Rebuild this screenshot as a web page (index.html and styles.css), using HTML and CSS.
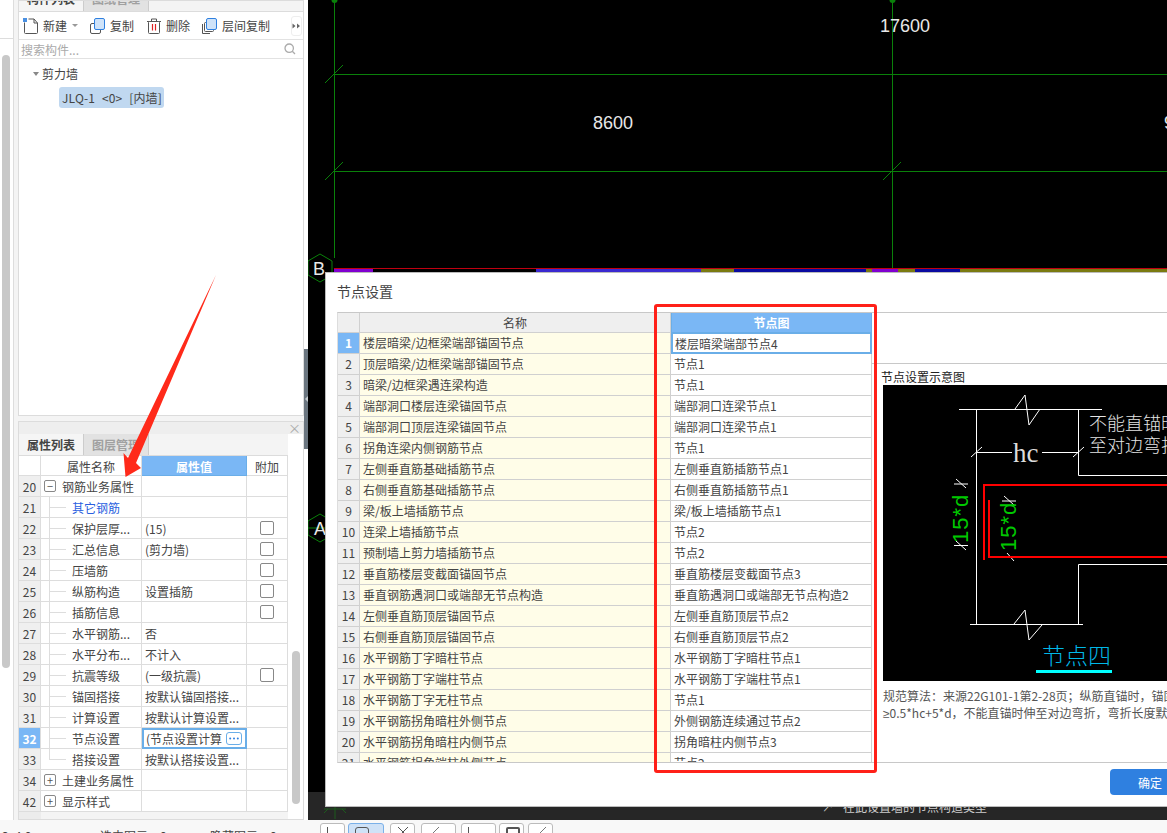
FILE: index.html
```html
<!DOCTYPE html>
<html lang="zh">
<head>
<meta charset="utf-8">
<title>节点设置</title>
<link rel="stylesheet" href="styles.css">
</head>
<body>
<div class="app">
  <div class="main">
    <aside class="sidebar">
      <div class="rail"><div class="rail-head"></div><div class="rail-thumb"></div></div>
      <div class="panels">
        <section class="panel panel-top">
          <div class="tabs tabs-clipped"><span class="tab tab-on">构件列表</span><span class="tab">图纸管理</span></div>
          <div class="toolbar">
            <svg class="ico ico-first" width="15" height="16" viewBox="0 0 15 16"><path d="M1.5 4.5V14.5a1 1 0 0 0 1 1h11a1 1 0 0 0 1-1V5L11 1H5.5" fill="none" stroke="#555"/><path d="M11 1v4h3.5" fill="none" stroke="#555"/><rect x="0" y="0" width="4" height="4" fill="#4a90e2"/></svg>
            <span class="lbl">新建</span><span class="caret"></span>
            <svg class="ico ico-copy" width="15" height="16" viewBox="0 0 15 16"><rect x="0.5" y="5.5" width="10" height="10" rx="1.5" fill="#fff" stroke="#555"/><rect x="4.5" y="0.5" width="10" height="11" rx="1.5" fill="#cfe3f9" stroke="#2f80e0"/></svg>
            <span class="lbl">复制</span>
            <svg class="ico ico-del" width="14" height="16" viewBox="0 0 14 16"><path d="M0 3.5h14M4.5 3V1h5v2" fill="none" stroke="#555"/><rect x="1.5" y="3.5" width="11" height="12" rx="1" fill="#fff" stroke="#555"/><path d="M5.5 6v6.5M8.5 6v6.5" stroke="#d22" stroke-width="1.2"/></svg>
            <span class="lbl">删除</span>
            <svg class="ico ico-layer" width="15" height="16" viewBox="0 0 15 16"><path d="M0.5 6v9.5H8" fill="none" stroke="#555"/><rect x="2.5" y="4.5" width="9" height="9" rx="1" fill="#fff" stroke="#555"/><rect x="4.5" y="0.5" width="10" height="11" rx="1.5" fill="#cfe3f9" stroke="#2f80e0"/></svg>
            <span class="lbl">层间复制</span>
            <span class="more"><svg width="9" height="6" viewBox="0 0 9 6"><path d="M0.5 0.5L3.5 3L0.5 5.5ZM5 0.5L8 3L5 5.5Z" fill="#666"/></svg></span>
          </div>
          <div class="search"><span>搜索构件...</span>
            <svg width="12" height="12" viewBox="0 0 12 12"><circle cx="5.2" cy="5.2" r="4.2" fill="none" stroke="#aaa" stroke-width="1.3"/><path d="M8.3 8.3L11 11" stroke="#aaa" stroke-width="1.3"/></svg>
          </div>
          <div class="tree">
            <div class="tree-root"><span class="tree-caret"></span>剪力墙</div>
            <div class="tree-chip">JLQ-1 &lt;0&gt; [内墙]</div>
          </div>
        </section>
        <section class="panel panel-props">
          <div class="props-head"><span class="close">×</span></div>
          <div class="tabs"><span class="tab tab-on">属性列表</span><span class="tab">图层管理</span></div>
          <div class="props-body">
            <div class="props-col">
              <div class="pgrid">
                <div class="c hd"></div><div class="c hd">属性名称</div><div class="c hd hd-on">属性值</div><div class="c hd">附加</div>

                <div class="c rh">20</div><div class="c nm grp"><span class="box">−</span>钢筋业务属性</div><div class="c"></div><div class="c"></div>
                <div class="c rh">21</div><div class="c nm kid link">其它钢筋</div><div class="c"></div><div class="c"></div>
                <div class="c rh">22</div><div class="c nm kid">保护层厚...</div><div class="c val">(15)</div><div class="c ck"><span class="cb"></span></div>
                <div class="c rh">23</div><div class="c nm kid">汇总信息</div><div class="c val">(剪力墙)</div><div class="c ck"><span class="cb"></span></div>
                <div class="c rh">24</div><div class="c nm kid">压墙筋</div><div class="c"></div><div class="c ck"><span class="cb"></span></div>
                <div class="c rh">25</div><div class="c nm kid">纵筋构造</div><div class="c val">设置插筋</div><div class="c ck"><span class="cb"></span></div>
                <div class="c rh">26</div><div class="c nm kid">插筋信息</div><div class="c"></div><div class="c ck"><span class="cb"></span></div>
                <div class="c rh">27</div><div class="c nm kid">水平钢筋...</div><div class="c val">否</div><div class="c"></div>
                <div class="c rh">28</div><div class="c nm kid">水平分布...</div><div class="c val">不计入</div><div class="c"></div>
                <div class="c rh">29</div><div class="c nm kid">抗震等级</div><div class="c val">(一级抗震)</div><div class="c ck"><span class="cb"></span></div>
                <div class="c rh">30</div><div class="c nm kid">锚固搭接</div><div class="c val">按默认锚固搭接...</div><div class="c"></div>
                <div class="c rh">31</div><div class="c nm kid">计算设置</div><div class="c val">按默认计算设置...</div><div class="c"></div>
                <div class="c rh rh-on">32</div><div class="c nm kid">节点设置</div><div class="c val editor"><span class="edit-text">(节点设置计算</span><span class="dots"><svg width="10" height="3" viewBox="0 0 10 3"><circle cx="1.2" cy="1.5" r="1" fill="#2f80e0"/><circle cx="5" cy="1.5" r="1" fill="#2f80e0"/><circle cx="8.8" cy="1.5" r="1" fill="#2f80e0"/></svg></span></div><div class="c"></div>
                <div class="c rh">33</div><div class="c nm kid kid-last">搭接设置</div><div class="c val">按默认搭接设置...</div><div class="c"></div>
                <div class="c rh">34</div><div class="c nm grp"><span class="box">+</span>土建业务属性</div><div class="c"></div><div class="c"></div>
                <div class="c rh">42</div><div class="c nm grp"><span class="box">+</span>显示样式</div><div class="c"></div><div class="c"></div>
              </div>
              <div class="props-foot"><span></span></div>
            </div>
            <div class="props-thumb"></div>
          </div>
        </section>
      </div>
      <div class="splitter"><div class="split-handle"><span></span></div></div>
    </aside>

    <div class="cad">
      <svg class="cad-view" width="859" height="792" viewBox="308 0 859 792">
        <g stroke="#0a800a" fill="none">
          <path d="M334.5 0V258M892.5 0V268M334 74.5H1167M334 171.5H1167"/>
          <path d="M325 83L343 65M325 180L343 162M883 180L901 162"/>
        </g>
        <circle cx="334.5" cy="0" r="3" fill="#0a800a"/>
        <circle cx="892.5" cy="0" r="3" fill="#0a800a"/>
        <g fill="#e8e8e8" class="cad-num">
          <text x="880" y="32">17600</text>
          <text x="593" y="129">8600</text>
          <text x="1164" y="129">9</text>
        </g>
        <rect x="334" y="268" width="833" height="1" fill="#c00010"/>
        <rect x="334" y="269" width="39" height="3" fill="#8000d0"/>
        <rect x="536" y="269" width="165" height="3" fill="#3a28d0"/>
        <rect x="701" y="269" width="466" height="3" fill="#7a7a10"/>
        <rect x="734" y="269" width="132" height="3" fill="#0a0aa0"/>
        <rect x="872" y="269" width="26" height="3" fill="#8000d0"/>
        <rect x="915" y="269" width="45" height="3" fill="#0a0aa0"/>
        <g fill="none" stroke="#0a800a">
          <path d="M320 254L332 261V275L320 282L308 275V261Z"/>
          <path d="M320 514L332 521V535L320 542L308 535V521Z"/>
          <path d="M308 528H325"/>
        </g>
        <g fill="#e8e8e8" class="cad-axis">
          <text x="313" y="275">B</text>
          <text x="314" y="535">A</text>
        </g>
      </svg>
      <div class="cad-status">
        <svg class="axis-ico" width="26" height="14" viewBox="0 0 26 14"><path d="M13 0V14M2 4H24M6 4L2 8M20 4L24 8" fill="none" stroke="#1d5a1d"/></svg>
        <span class="hint"><span class="hint-cursor">↗</span>在此设置墙的节点构造类型</span>
      </div>
    </div>
  </div>

  <footer class="bottom">
    <div class="stats"><span class="s1">3: 4.0</span><span class="s2">选中图元：0</span><span class="s3">隐藏图元：0</span></div>
    <div class="btns">
      <span class="bt b1"><i class="tick"></i></span>
      <span class="bt b2 bt-on"><i class="sq"></i></span>
      <span class="bt b1 g6"><i class="ex"></i></span>
      <span class="bt b3 g6"><i class="sl"></i></span>
      <span class="bt b3 g5"><i class="tick"></i></span>
      <span class="bt b4 g3"><i class="mon"></i></span>
      <span class="bt b4 g4"><i class="sl"></i></span>
    </div>
  </footer>
</div>

<div class="dialog">
  <div class="dlg-title">节点设置</div>
  <div class="dlg-body">
    <div class="ngrid-wrap">
      <div class="ngrid">
        <div class="d hd"></div><div class="d hd">名称</div><div class="d hd hd-on">节点图</div>
        <div class="d rh rh-on">1</div><div class="d yl">楼层暗梁/边框梁端部锚固节点</div><div class="d dv cur">楼层暗梁端部节点4</div>
        <div class="d rh">2</div><div class="d yl">顶层暗梁/边框梁端部锚固节点</div><div class="d dv">节点1</div>
        <div class="d rh">3</div><div class="d yl">暗梁/边框梁遇连梁构造</div><div class="d dv">节点1</div>
        <div class="d rh">4</div><div class="d yl">端部洞口楼层连梁锚固节点</div><div class="d dv">端部洞口连梁节点1</div>
        <div class="d rh">5</div><div class="d yl">端部洞口顶层连梁锚固节点</div><div class="d dv">端部洞口连梁节点1</div>
        <div class="d rh">6</div><div class="d yl">拐角连梁内侧钢筋节点</div><div class="d dv">节点1</div>
        <div class="d rh">7</div><div class="d yl">左侧垂直筋基础插筋节点</div><div class="d dv">左侧垂直筋插筋节点1</div>
        <div class="d rh">8</div><div class="d yl">右侧垂直筋基础插筋节点</div><div class="d dv">右侧垂直筋插筋节点1</div>
        <div class="d rh">9</div><div class="d yl">梁/板上墙插筋节点</div><div class="d dv">梁/板上墙插筋节点1</div>
        <div class="d rh">10</div><div class="d yl">连梁上墙插筋节点</div><div class="d dv">节点2</div>
        <div class="d rh">11</div><div class="d yl">预制墙上剪力墙插筋节点</div><div class="d dv">节点2</div>
        <div class="d rh">12</div><div class="d yl">垂直筋楼层变截面锚固节点</div><div class="d dv">垂直筋楼层变截面节点3</div>
        <div class="d rh">13</div><div class="d yl">垂直钢筋遇洞口或端部无节点构造</div><div class="d dv">垂直筋遇洞口或端部无节点构造2</div>
        <div class="d rh">14</div><div class="d yl">左侧垂直筋顶层锚固节点</div><div class="d dv">左侧垂直筋顶层节点2</div>
        <div class="d rh">15</div><div class="d yl">右侧垂直筋顶层锚固节点</div><div class="d dv">右侧垂直筋顶层节点2</div>
        <div class="d rh">16</div><div class="d yl">水平钢筋丁字暗柱节点</div><div class="d dv">水平钢筋丁字暗柱节点1</div>
        <div class="d rh">17</div><div class="d yl">水平钢筋丁字端柱节点</div><div class="d dv">水平钢筋丁字端柱节点1</div>
        <div class="d rh">18</div><div class="d yl">水平钢筋丁字无柱节点</div><div class="d dv">节点1</div>
        <div class="d rh">19</div><div class="d yl">水平钢筋拐角暗柱外侧节点</div><div class="d dv">外侧钢筋连续通过节点2</div>
        <div class="d rh">20</div><div class="d yl">水平钢筋拐角暗柱内侧节点</div><div class="d dv">拐角暗柱内侧节点3</div>
        <div class="d rh">21</div><div class="d yl">水平钢筋拐角端柱外侧节点</div><div class="d dv">节点2</div>
      </div>
    </div>
    <div class="preview">
      <div class="preview-top"></div>
      <div class="preview-label">节点设置示意图</div>
      <svg class="diagram" width="284" height="296" viewBox="883 385 284 296">
        <g fill="none" stroke="#fff" stroke-width="1">
          <path d="M959 409.5H1102M976.5 409.5V624.5M1078.5 409.5V475.5H1167M1078.5 564.5V624.5M1078.5 564.5H1167M970 624.5H1083"/>
          <path d="M1015 409L1025 395L1029 425L1040 409M1014 624L1025 610L1029 640L1042 625"/>
          <path d="M976.5 452.5H1012M1042 452.5H1078.5M971 457L982 447M1073 457L1084 447"/>
          <path d="M956 479L966 488M954 484H968M956 541L966 550M954 545.5H968M1004 496L1014 505M1002 501H1016M1007 553L1014 561M1007 557H1020"/>
        </g>
        <g fill="none" stroke="#f00" stroke-width="2">
          <path d="M984 560V485H1167"/>
          <path d="M989 500V557H1167"/>
        </g>
        <text class="dg-hc" x="1013" y="462">hc</text>
        <text class="dg-cn" x="1089" y="430">不能直锚时伸</text>
        <text class="dg-cn" x="1089" y="452">至对边弯折</text>
        <text class="dg-g" transform="translate(968 543) rotate(-90)">15*d</text>
        <text class="dg-g" transform="translate(1016 551) rotate(-90)">15*d</text>
        <text class="dg-title" x="1042" y="664">节点四</text>
        <rect x="1036" y="670" width="76" height="3" fill="#00ffff"/>
      </svg>
      <div class="rule">规范算法：来源22G101-1第2-28页；纵筋直锚时，锚固长度≥lae且</div>
      <div class="rule"><span class="ge">≥</span>0.5*hc+5*d，不能直锚时伸至对边弯折，弯折长度默认15d。</div>
    </div>
  </div>
  <div class="dlg-foot"><button class="ok">确定</button></div>
</div>

<div class="red-frame"></div>
<svg class="red-arrow" width="1167" height="833" viewBox="0 0 1167 833">
  <path d="M216 275L136 463L141 468L125.5 477L123.5 453L128 458Z" fill="#ff2a1a"/>
</svg>
</body>
</html>
```

FILE: styles.css
```css
* { box-sizing: border-box; }
html, body { margin: 0; padding: 0; }
body {
  width: 1167px;
  height: 833px;
  overflow: hidden;
  position: relative;
  background: #f8f8f8;
  font: 12px/17px "Noto Sans CJK SC", "Liberation Sans", sans-serif;
  color: #444;
}
.app { display: flex; flex-direction: column; height: 833px; }
.main { display: flex; height: 820px; }

/* sidebar */
.sidebar { width: 308px; display: flex; background: #f4f4f4; }
.rail { width: 14px; background: #fff; border-right: 1px solid #ddd; }
.rail-head { height: 39px; border-bottom: 1px solid #ddd; }
.rail-thumb { width: 8px; height: 613px; margin: 16px 0 0 2px; border-radius: 4px; background: #c8c8c8; }
.panels { width: 286px; margin-left: 4px; display: flex; flex-direction: column; gap: 5px; }
.panel { border: 1px solid #dcdcdc; background: #fff; overflow: hidden; }
.panel-top { height: 416px; }
.panel-props { height: 399px; }
.splitter { width: 4px; background: #fff; padding-top: 349px; }
.split-handle { height: 100px; background: #6b7680; display: flex; align-items: center; }
.split-handle span { border: 3px solid transparent; border-right-color: #c5cbd0; margin-left: -2px; }

.tabs { display: flex; height: 22px; background: #f4f4f4; border-bottom: 1px solid #dcdcdc; }
.tab { width: 65px; text-align: center; line-height: 22px; background: #e2e2e2; color: #a0a0a0; font-weight: 700; border-right: 1px solid #ccc; }
.tab-on { background: #f5f5f5; color: #444; }
.tabs-clipped { height: 11px; align-items: flex-end; }
.tabs-clipped .tab { height: 22px; flex: none; line-height: 20px; }

.toolbar { display: flex; align-items: center; height: 28px; border-bottom: 1px solid #e2e2e2; }
.ico { flex: none; }
.ico-first { margin-left: 4px; }
.ico-copy { margin-left: 12px; }
.ico-del { margin-left: 13px; }
.ico-layer { margin-left: 12px; }
.lbl { margin-left: 5px; white-space: nowrap; }
.caret { margin-left: 5px; border: 3px solid transparent; border-top-color: #999; border-bottom: 0; }
.more { display: flex; align-items: center; justify-content: center; margin-left: 21px; width: 11px; height: 20px; border: 1px solid #eee; border-radius: 3px; }
.search { display: flex; align-items: center; justify-content: space-between; height: 19px; padding: 0 7px 0 2px; border-bottom: 1px solid #e2e2e2; color: #aaa; }
.tree { padding-top: 6px; }
.tree-root { display: flex; align-items: center; height: 17px; padding-left: 14px; color: #444; }
.tree-caret { margin-right: 3px; border: 3px solid transparent; border-top: 4px solid #888; border-bottom: 0; }
.tree-chip { width: 105px; height: 21px; margin: 5px 0 0 40px; border-radius: 3px; background: #c0d8f0; line-height: 21px; padding-left: 3px; white-space: pre; word-spacing: 4px; letter-spacing: 0.15px; }

.props-head { height: 12px; background: #eee; }
.close { float: right; margin: -3px 2px 0 0; font-size: 13px; line-height: 17px; color: #aaa; }
.props-body { display: flex; }
.props-col { width: 269px; }
.pgrid { display: grid; grid-template-columns: 22px 101px 105px 41px; grid-template-rows: 20px repeat(16, 21px); }
.c { border-right: 1px solid #ddd; border-bottom: 1px solid #ddd; background: #fff; white-space: nowrap; overflow: hidden; line-height: 21px; }
.hd { background: #fff; text-align: center; }
.hd-on { background: #7ab7f5; color: #fff; font-weight: 700; border-color: #6aaee8; }
.rh { background: #efefef; text-align: center; }
.rh-on { background: #7ab7f5; color: #fff; font-weight: 700; }
.nm { padding-left: 31px; }
.grp { display: flex; align-items: center; padding-left: 3px; }
.box { width: 12px; height: 12px; margin-right: 6px; border: 1px solid #888; border-radius: 2px; line-height: 10px; text-align: center; font-size: 11px; color: #555; }
.kid { background: linear-gradient(#ddd, #ddd) 8px 0 / 1px 100% no-repeat, linear-gradient(#ddd, #ddd) 9px 10px / 16px 1px no-repeat, #fff; }
.kid-last { background: linear-gradient(#ddd, #ddd) 8px 0 / 1px 11px no-repeat, linear-gradient(#ddd, #ddd) 9px 10px / 16px 1px no-repeat, #fff; }
.link { color: #2a5fe0; }
.val { padding-left: 3px; }
.ck { display: flex; align-items: center; justify-content: center; }
.cb { width: 14px; height: 14px; border: 1px solid #888; border-radius: 2px; background: #fff; }
.editor { display: flex; align-items: center; padding-left: 2px; border: 2px solid #6aaee8; }
.edit-text { flex: none; width: 80px; overflow: hidden; }
.dots { display: flex; align-items: center; justify-content: center; width: 16px; height: 13px; border: 1px solid #6aaee8; border-radius: 3px; }
.props-foot { height: 7px; background: #f4f4f4; }
.props-foot span { display: block; width: 22px; height: 7px; background: #ececec; }
.props-thumb { width: 8px; height: 153px; margin: 195px 0 0 4px; border-radius: 4px; background: #c8c8c8; }

/* CAD view */
.cad { flex: 1; display: flex; flex-direction: column; background: #000; overflow: hidden; }
.cad-view { display: block; flex: none; }
.cad-num text { font: 18px "Liberation Sans", sans-serif; }
.cad-axis text { font: 18px "Liberation Sans", sans-serif; }
.cad-status { height: 28px; background: #262626; display: flex; align-items: flex-end; }
.axis-ico { margin: 0 0 1px 14px; flex: none; }
.hint { margin: 0 0 5px 474px; color: #ccc; font-size: 12px; line-height: 17px; white-space: nowrap; }
.hint-cursor { margin-right: 9px; }

/* bottom bar */
.bottom { display: flex; height: 13px; overflow: hidden; background: #f8f8f8; }
.stats { width: 320px; flex: none; padding-top: 7px; display: flex; white-space: nowrap; }
.s1 { width: 100px; padding-left: 2px; }
.s2 { width: 110px; }
.btns { display: flex; padding-top: 3px; gap: 3px; align-items: flex-start; }
.bt { display: block; height: 24px; border: 1px solid #bbb; border-radius: 3px; background: #fff; }
.b1 { width: 25px; }
.b2 { width: 36px; }
.b3 { width: 35px; }
.b4 { width: 25px; }
.g6 { margin-left: 3px; }
.g5 { margin-left: 2px; }
.g3 { margin-left: 0; }
.g4 { margin-left: 1px; }
.bt-on { background: #cfe2f7; border-color: #7ab0e8; }
.bt i { display: block; margin: 3px 0 0 6px; }
.tick { width: 1px; height: 10px; background: #555; }
.sq { width: 14px; height: 10px; border: 1px solid #555; border-radius: 3px; }
.ex { width: 12px; height: 10px; background: linear-gradient(45deg, transparent 46%, #555 46%, #555 54%, transparent 54%), linear-gradient(-45deg, transparent 46%, #555 46%, #555 54%, transparent 54%); }
.sl { width: 12px; height: 10px; background: linear-gradient(-45deg, transparent 46%, #777 46%, #777 54%, transparent 54%); }
.mon { width: 14px; height: 10px; border: 2px solid #555; border-radius: 2px; }

/* dialog */
.dialog { position: absolute; left: 325px; top: 272px; width: 900px; height: 535px; background: #fff; border: 1px solid #bbb; border-width: 1px 0 1px 1px; display: flex; flex-direction: column; }
.dlg-title { height: 39px; padding: 10px 0 0 11px; font-size: 14px; line-height: 17px; color: #444; }
.dlg-body { display: flex; height: 451px; }
.ngrid-wrap { width: 535px; margin-left: 11px; flex: none; height: 451px; overflow: hidden; border-top: 1px solid #c8c8c8; border-bottom: 1px solid #c8c8c8; border-left: 1px solid #ddd; }
.ngrid { display: grid; grid-template-columns: 22px 311px 201px; grid-template-rows: 20px repeat(21, 21px); }
.d { border-right: 1px solid #d0d0d0; border-bottom: 1px solid #d0d0d0; background: #fff; white-space: nowrap; line-height: 20px; overflow: hidden; }
.d.hd { background: #efefef; text-align: center; }
.d.hd-on { background: #7ab7f5; color: #fff; font-weight: 700; border: 1px solid #6aaee8; border-top: 0; }
.d.rh { background: #efefef; text-align: center; }
.d.rh-on { background: #7ab7f5; color: #fff; font-weight: 700; }
.yl { background: #fffde8; padding-left: 3px; }
.dv { padding-left: 3px; }
.cur { border: 2px solid #6aaee8; border-top-width: 1px; padding-left: 2px; }
.preview { flex: 1; border-top: 1px solid #c8c8c8; border-bottom: 1px solid #c8c8c8; overflow: hidden; }
.preview-top { height: 51px; border-bottom: 1px solid #c8c8c8; }
.preview-label { height: 21px; padding: 4px 0 0 9px; color: #222; line-height: 17px; }
.diagram { display: block; margin-left: 11px; background: #000; }
.rule { padding-left: 11px; line-height: 17px; white-space: nowrap; color: #555; }
.diagram + .rule { margin-top: 6px; }
.ge { font-family: "Liberation Sans", sans-serif; }
.dg-hc { font: 27px "Liberation Serif", serif; fill: #dcdcdc; }
.dg-cn { font: 300 18px "Noto Sans CJK SC", sans-serif; fill: #e4e4e4; }
.dg-g { font: 22px "Liberation Sans", sans-serif; fill: #00c800; letter-spacing: 1px; }
.dg-title { font: 300 23px "Noto Sans CJK SC", sans-serif; fill: #00b8e8; }
.dlg-foot { flex: 1; display: flex; padding: 6px 0 0 784px; }
.ok { width: 100px; height: 26px; border: 0; border-radius: 4px; background: #2f80e0; color: #fff; font: 12px "Noto Sans CJK SC", sans-serif; text-align: left; padding-left: 28px; }

/* annotation */
.red-frame { position: absolute; left: 654px; top: 304px; width: 223px; height: 469px; border: 3px solid #ff2018; border-radius: 3px; }
.red-arrow { position: absolute; left: 0; top: 0; pointer-events: none; }
```
